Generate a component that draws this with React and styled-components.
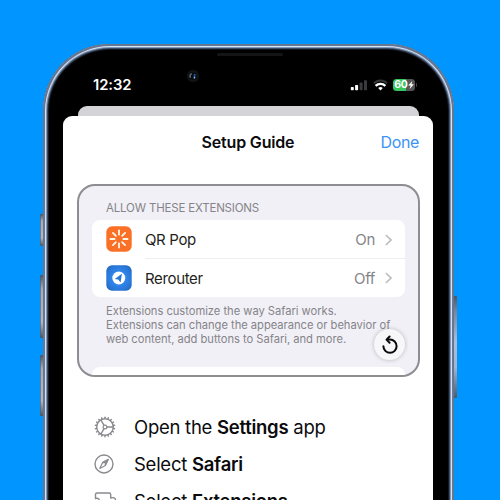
import React from 'react';
import styled, { createGlobalStyle } from 'styled-components';

const GlobalStyle = createGlobalStyle`
  *, *::before, *::after { box-sizing: border-box; }
  body { margin: 0; overflow: hidden; background: #0095ff; }
`;

const Stage = styled.main`
  width: 500px;
  height: 500px;
  overflow: hidden;
  padding-top: 44px;
  display: grid;
  grid-template-columns: 3px 411px 3px;
  justify-content: start;
  padding-left: 40px;
  background: #0095ff;
  font-family: Inter, 'Liberation Sans', sans-serif;
  color: #0b0b0d;
`;

const Rail = styled.div`
  display: flex;
  flex-direction: column;
`;

const SideButton = styled.div`
  flex: none;
  height: ${(p) => p.$height}px;
  margin-top: ${(p) => p.$gap}px;
  border-radius: ${(p) => (p.$right ? '0 1px 1px 0' : '1px 0 0 1px')};
  background: ${(p) =>
    p.$right
      ? 'linear-gradient(#4c5663, #77869b 15%, #a8bdd8 45%, #a0b4d0 70%, #4b596c)'
      : 'linear-gradient(90deg, #39608a, transparent 45%), linear-gradient(#4f5660, #a9abb3 22%, #b5b6bf 75%, #4f5660)'};
`;

const Phone = styled.div`
  height: 560px;
  border-radius: 67px 67px 0 0;
  background: #000;
  padding: 0 21px 0 20px;
  box-shadow:
    inset 0 0 0 1px #687689,
    inset 0 0 0 2px #66789a,
    inset 0 0 0 3px #d5e2f3,
    inset 0 0 0 4px #8298b8,
    inset 0 0 0 5px #3c4b62,
    inset 0 0 0 6px #141a23;
`;

const Speaker = styled.div`
  width: 66px;
  height: 3px;
  margin: 9px 0 0 154px;
  border-radius: 2px;
  background: #151515;
`;

const StatusBar = styled.header`
  height: 50px;
  padding: 0 16px 0 30px;
  display: flex;
  align-items: center;
`;

const Clock = styled.span`
  width: 93px;
  padding-top: 8px;
  color: #fff;
  font-size: 14.8px;
  font-weight: 600;
  line-height: 18px;
  letter-spacing: -0.1px;
`;

const Camera = styled.svg`
  width: 14px;
  height: 14px;
  margin-top: -10px;
`;

const Indicators = styled.div`
  display: flex;
  align-items: center;
  margin: 8px 0 0 auto;
  height: 14px;
`;

const Signal = styled.svg`
  width: 18px;
  height: 12px;
  margin-right: 5px;
`;

const Wifi = styled.svg`
  width: 15px;
  height: 12px;
  margin-right: 5px;
`;

const Battery = styled.div`
  width: 22px;
  height: 12px;
  border-radius: 3.5px;
  display: flex;
  align-items: center;
  justify-content: center;
  background: linear-gradient(90deg, #35c759 60%, #555558 60%);
  color: #fff;
  font-size: 10.5px;
  font-weight: 700;
  line-height: 12px;
  letter-spacing: -0.3px;
`;

const Bolt = styled.svg`
  width: 6px;
  height: 8px;
`;

const BatteryTip = styled.div`
  width: 1px;
  height: 4px;
  margin-left: 1px;
  border-radius: 0 1px 1px 0;
  background: #444;
`;

const BackSheet = styled.div`
  height: 10px;
  margin: 0 14px 0 15px;
  border-radius: 9px 9px 0 0;
  background: #d4d3d8;
`;

const Sheet = styled.section`
  height: 450px;
  padding: 0 13px 0 14px;
  border-radius: 9px 9px 0 0;
  background: #fff;
`;

const Nav = styled.div`
  height: 68px;
  display: grid;
  grid-template-columns: 1fr auto 1fr;
  align-items: center;
  padding: 0 1px 16px 0;
`;

const Title = styled.h1`
  grid-column: 2;
  margin: 0;
  font-size: 16px;
  font-weight: 600;
  line-height: 20px;
  letter-spacing: -0.18px;
`;

const Done = styled.button`
  justify-self: end;
  padding: 0;
  border: 0;
  background: none;
  color: #3a93f5;
  font: 400 16px/20px Inter, sans-serif;
  letter-spacing: -0.35px;
`;

const Preview = styled.div`
  position: relative;
  height: 193px;
  padding: 0 13px;
  border: 2px solid #8d8d92;
  border-radius: 18px;
  overflow: hidden;
  background: #f1f0f6;
`;

const GroupLabel = styled.div`
  height: 34px;
  padding: 14px 14px 0;
  color: #858489;
  font-size: 11.5px;
  line-height: 16px;
  letter-spacing: -0.18px;
`;

const Group = styled.div`
  height: 77px;
  border-radius: 8px;
  background: #fff;
  overflow: hidden;
`;

const Row = styled.div`
  display: flex;
  align-items: center;
  height: 38.5px;
  padding-left: 14px;
`;

const AppIcon = styled.svg`
  width: 26px;
  height: 26px;
  margin-right: 13px;
`;

const RowBody = styled.div`
  flex: 1;
  height: 100%;
  display: flex;
  align-items: center;
  padding: 2px 13px 0 0;
  border-bottom: 1px solid ${(p) => (p.$last ? 'transparent' : '#eeeef1')};
  font-size: 15px;
  letter-spacing: -0.35px;
  color: #1f1f21;
`;

const Value = styled.span`
  margin-left: auto;
  margin-right: 10px;
  color: #858489;
`;

const Chevron = styled.svg`
  width: 7px;
  height: 12px;
`;

const Footnote = styled.p`
  height: 70px;
  margin: 0;
  padding: 7px 0 0 14px;
  color: #858489;
  font-size: 11.2px;
  line-height: 14px;
  white-space: nowrap;
  letter-spacing: -0.03px;
`;

const NextGroup = styled.div`
  height: 20px;
  border-radius: 8px 8px 0 0;
  background: #fff;
`;

const Replay = styled.button`
  position: absolute;
  right: 13px;
  bottom: 15px;
  width: 31px;
  height: 31px;
  padding: 0;
  border: 0;
  border-radius: 50%;
  display: grid;
  place-items: center;
  background: #f7f7f9;
  box-shadow: 0 0 4px rgba(0, 0, 0, 0.24);
`;

const ReplayIcon = styled.svg`
  width: 18px;
  height: 20px;
`;

const Steps = styled.ol`
  margin: 0;
  padding: 31px 0 0 16px;
  list-style: none;
`;

const Step = styled.li`
  display: grid;
  grid-template-columns: 41px auto;
  align-items: center;
  height: 37px;
  font-size: 18.5px;
  line-height: 24px;
  white-space: nowrap;
  letter-spacing: -0.26px;

  b { font-weight: 600; }
`;

const StepIcon = styled.svg`
  width: 24px;
  height: 24px;
  fill: none;
  stroke: #8b8b90;
  stroke-width: 1.4;
  stroke-linecap: round;
  stroke-linejoin: round;
`;

const rays = [0, 45, 90, 135, 180, 225, 270, 315];
const teeth = Array.from({ length: 18 }, (_, i) => i * 20);

function QrPopIcon() {
  return (
    <AppIcon viewBox="0 0 26 26">
      <rect x=".3" y=".3" width="25.4" height="25.4" rx="5.8" fill="#fa7027" />
      <g stroke="#fff8ed" strokeWidth="1.8" strokeLinecap="round">
        {rays.map((a) => (
          <path key={a} d="M13 4.4V8.6" transform={`rotate(${a} 13 13)`} />
        ))}
      </g>
    </AppIcon>
  );
}

function RerouterIcon() {
  return (
    <AppIcon viewBox="0 0 26 26">
      <defs>
        <radialGradient id="rerouterBlue" cx=".5" cy=".5" r=".7">
          <stop offset=".35" stopColor="#3186ed" />
          <stop offset=".7" stopColor="#2877d7" />
          <stop offset="1" stopColor="#1d5aa9" />
        </radialGradient>
      </defs>
      <rect x=".3" y=".3" width="25.4" height="25.4" rx="5.8" fill="url(#rerouterBlue)" />
      <circle cx="12.8" cy="13" r="6.5" fill="#fff" />
      <path d="M15.9 8.7 8.7 14.1l3.5.5 2.4 3z" fill="#2877d7" />
    </AppIcon>
  );
}

function ExtensionRow({ icon, name, value, last }) {
  return (
    <Row>
      {icon}
      <RowBody $last={last}>
        {name}
        <Value>{value}</Value>
        <Chevron viewBox="0 0 7 12" fill="none" stroke="#bdbdc1" strokeWidth="1.7">
          <path d="M.8 1 6 6 .8 11" />
        </Chevron>
      </RowBody>
    </Row>
  );
}

export default function App() {
  return (
    <>
      <GlobalStyle />
      <Stage>
        <Rail>
          <SideButton $gap={170} $height={32} />
          <SideButton $gap={29} $height={63} />
          <SideButton $gap={17} $height={61} />
        </Rail>
        <Phone>
          <Speaker />
          <StatusBar>
            <Clock>12:32</Clock>
            <Camera viewBox="0 0 14 14">
              <circle cx="7" cy="7" r="6.2" fill="#111215" />
              <circle cx="7" cy="7" r="3.6" fill="#080a0e" />
              <path d="M4.3 8.8Q3.3 6 5.7 4.6" fill="none" stroke="#70747c" strokeWidth="1.2" />
              <path d="M8 4.7l1.6.5-.3 4-2 .4z" fill="#24589d" />
              <circle cx="8.5" cy="8.8" r=".7" fill="#acd1ee" />
            </Camera>
            <Indicators>
              <Signal viewBox="0 0 18 12">
                <rect x=".8" y="8" width="3" height="3.2" rx=".7" fill="#fff" />
                <rect x="5.1" y="6" width="3" height="5.2" rx=".7" fill="#fff" />
                <rect x="9.6" y="3.6" width="3" height="7.6" rx=".7" fill="#3b3b3d" />
                <rect x="14" y="1.2" width="3" height="10" rx=".7" fill="#3b3b3d" />
              </Signal>
              <Wifi viewBox="0 0 15 12" fill="none">
                <path d="M.8 4.4C4.5.6 10.5.6 14.2 4.4" stroke="#353537" strokeWidth="2" />
                <path d="M2.6 6.9c2.8-2.8 7-2.8 9.8 0" stroke="#fff" strokeWidth="2.2" />
                <path d="M5.2 9.1q2.3-2 4.6 0L7.5 11.5z" fill="#fff" />
              </Wifi>
              <Battery>
                60
                <Bolt viewBox="0 0 6 8">
                  <path d="M4.3 0 .2 4.6h2.4L1.7 8 5.9 3.3H3.5z" fill="#fff" />
                </Bolt>
              </Battery>
              <BatteryTip />
            </Indicators>
          </StatusBar>
          <BackSheet />
          <Sheet>
            <Nav>
              <Title>Setup Guide</Title>
              <Done>Done</Done>
            </Nav>
            <Preview>
              <GroupLabel>ALLOW THESE EXTENSIONS</GroupLabel>
              <Group>
                <ExtensionRow icon={<QrPopIcon />} name="QR Pop" value="On" />
                <ExtensionRow icon={<RerouterIcon />} name="Rerouter" value="Off" last />
              </Group>
              <Footnote>
                Extensions customize the way Safari works.
                <br />
                Extensions can change the appearance or behavior of
                <br />
                web content, add buttons to Safari, and more.
              </Footnote>
              <NextGroup />
              <Replay aria-label="Replay">
                <ReplayIcon viewBox="0 0 18 20" fill="none" stroke="#09090a" strokeWidth="2" strokeLinecap="round" strokeLinejoin="round">
                  <path d="M2.4 11.2a6.6 6.6 0 1 0 6.6-6.6h-2" />
                  <path d="M8.6 1.5 5.5 4.6l3.1 3.2" />
                </ReplayIcon>
              </Replay>
            </Preview>
            <Steps>
              <Step>
                <StepIcon viewBox="0 0 24 24">
                  <circle cx="12" cy="12" r="8.3" />
                  <circle cx="12" cy="12" r="1.9" strokeWidth="1.2" />
                  <path d="M13.9 12h6.3M11 10.3 7.9 4.9M11 13.7l-3.1 5.4" />
                  {teeth.map((a) => (
                    <path key={a} d="M12 3.3V2.3" transform={`rotate(${a} 12 12)`} strokeWidth="1.5" />
                  ))}
                </StepIcon>
                <span>Open the <b>Settings</b> app</span>
              </Step>
              <Step>
                <StepIcon viewBox="0 0 24 24">
                  <circle cx="11" cy="12" r="9" />
                  <path d="M15.2 7.5 12.4 13.4 6.8 16.5 9.6 10.6z" strokeWidth="1.2" />
                  <path d="M15.2 7.5 12.4 13.4 9.6 10.6z" fill="#8b8b90" strokeWidth=".8" />
                  <circle cx="11" cy="12" r=".9" fill="#fff" stroke="none" />
                </StepIcon>
                <span>Select <b>Safari</b></span>
              </Step>
              <Step>
                <StepIcon viewBox="0 0 24 24">
                  <path d="M2.5 8.5V5.5Q2.5 4 4 4h12.2q1.5 0 1.5 1.5V9q4.5-1.4 5 2.5-.5 4-5 2.5v5H3v-4.7q3.3.7 3.3-2.5 0-3.2-3.8-2.3z" />
                </StepIcon>
                <span>Select <b>Extensions</b></span>
              </Step>
            </Steps>
          </Sheet>
        </Phone>
        <Rail>
          <SideButton $right $gap={252} $height={102} />
        </Rail>
      </Stage>
    </>
  );
}
